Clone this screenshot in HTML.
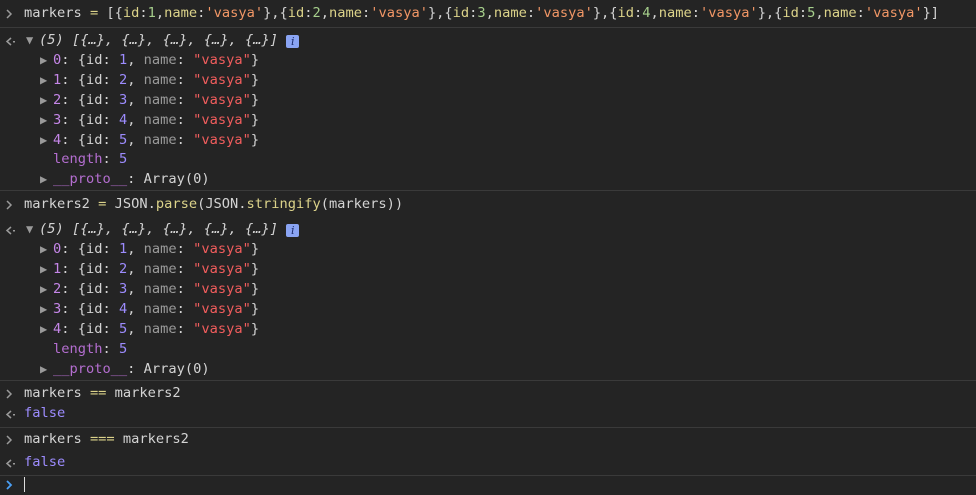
<!DOCTYPE html>
<html><head><meta charset="utf-8"><style>
body{margin:0;width:976px;height:495px;background:#242424;overflow:hidden;font-family:"DejaVu Sans Mono","Liberation Mono",monospace;font-size:13.7px;color:#d4d4d4;position:relative}
.l{position:absolute;left:0;white-space:pre;line-height:20px;height:20px}
.sep{position:absolute;left:0;width:976px;height:1px;background:#3a3a3a}
.y{color:#dcd38a}.g{color:#a6cf8c}.o{color:#f29766}.p{color:#c586e8}.n{color:#9d8cff}.r{color:#f25d5d}.k{color:#9a9a9a}.it{font-style:italic}
.lk{color:#b46ed0}
.pr{position:absolute;left:5px;top:5px}
.tri{display:inline-block;width:13px;color:#9a9a9a;font-size:12px;vertical-align:0}
.info{display:inline-block;width:13px;height:13px;background:#8aa4f3;color:#1a2a6a;border-radius:2px;font-size:11px;line-height:13px;text-align:center;font-style:italic;vertical-align:-1px;font-family:"DejaVu Serif",serif}
</style></head><body>
<svg width="0" height="0" style="position:absolute"><defs>
<g id="gt"><path d="M2 2 L6 6 L2 10" fill="none" stroke="#9a9a9a" stroke-width="1.5"/></g>
<g id="lt"><path d="M6 3 L2 6.5 L6 10" fill="none" stroke="#9a9a9a" stroke-width="1.5"/><rect x="8" y="6" width="2" height="1.5" fill="#9a9a9a"/></g>
</defs></svg>
<div class="l" style="top:3px"><svg class="pr" width="12" height="12"><use href="#gt"/></svg><span style="position:absolute;left:24px">markers <span class="y">=</span> [{<span class="y">id</span>:<span class="g">1</span>,<span class="y">name</span>:<span class="o">'vasya'</span>},{<span class="y">id</span>:<span class="g">2</span>,<span class="y">name</span>:<span class="o">'vasya'</span>},{<span class="y">id</span>:<span class="g">3</span>,<span class="y">name</span>:<span class="o">'vasya'</span>},{<span class="y">id</span>:<span class="g">4</span>,<span class="y">name</span>:<span class="o">'vasya'</span>},{<span class="y">id</span>:<span class="g">5</span>,<span class="y">name</span>:<span class="o">'vasya'</span>}]</span></div>
<div class="sep" style="top:27px"></div>
<div class="l" style="top:30px"><svg class="pr" width="12" height="12"><use href="#lt"/></svg><span style="position:absolute;left:26px"><span class="tri">▼</span><span class="it">(5) [{…}, {…}, {…}, {…}, {…}]</span> <span class="info">i</span></span></div>
<div class="l" style="top:50px;left:40px"><span class="tri">▶</span><span class="p">0</span>: {id: <span class="n">1</span>, <span class="k">name</span>: <span class="r">"vasya"</span>}</div>
<div class="l" style="top:70px;left:40px"><span class="tri">▶</span><span class="p">1</span>: {id: <span class="n">2</span>, <span class="k">name</span>: <span class="r">"vasya"</span>}</div>
<div class="l" style="top:90px;left:40px"><span class="tri">▶</span><span class="p">2</span>: {id: <span class="n">3</span>, <span class="k">name</span>: <span class="r">"vasya"</span>}</div>
<div class="l" style="top:110px;left:40px"><span class="tri">▶</span><span class="p">3</span>: {id: <span class="n">4</span>, <span class="k">name</span>: <span class="r">"vasya"</span>}</div>
<div class="l" style="top:130px;left:40px"><span class="tri">▶</span><span class="p">4</span>: {id: <span class="n">5</span>, <span class="k">name</span>: <span class="r">"vasya"</span>}</div>
<div class="l" style="top:149px;left:53px"><span class="lk">length</span>: <span class="n">5</span></div>
<div class="l" style="top:169px;left:40px"><span class="tri">▶</span><span class="lk">__proto__</span>: Array(0)</div>
<div class="sep" style="top:190px"></div>
<div class="l" style="top:194px"><svg class="pr" width="12" height="12"><use href="#gt"/></svg><span style="position:absolute;left:24px">markers2 <span class="y">=</span> JSON.<span class="y">parse</span>(JSON.<span class="y">stringify</span>(markers))</span></div>
<div class="l" style="top:219px"><svg class="pr" width="12" height="12"><use href="#lt"/></svg><span style="position:absolute;left:26px"><span class="tri">▼</span><span class="it">(5) [{…}, {…}, {…}, {…}, {…}]</span> <span class="info">i</span></span></div>
<div class="l" style="top:239px;left:40px"><span class="tri">▶</span><span class="p">0</span>: {id: <span class="n">1</span>, <span class="k">name</span>: <span class="r">"vasya"</span>}</div>
<div class="l" style="top:259px;left:40px"><span class="tri">▶</span><span class="p">1</span>: {id: <span class="n">2</span>, <span class="k">name</span>: <span class="r">"vasya"</span>}</div>
<div class="l" style="top:279px;left:40px"><span class="tri">▶</span><span class="p">2</span>: {id: <span class="n">3</span>, <span class="k">name</span>: <span class="r">"vasya"</span>}</div>
<div class="l" style="top:299px;left:40px"><span class="tri">▶</span><span class="p">3</span>: {id: <span class="n">4</span>, <span class="k">name</span>: <span class="r">"vasya"</span>}</div>
<div class="l" style="top:319px;left:40px"><span class="tri">▶</span><span class="p">4</span>: {id: <span class="n">5</span>, <span class="k">name</span>: <span class="r">"vasya"</span>}</div>
<div class="l" style="top:339px;left:53px"><span class="lk">length</span>: <span class="n">5</span></div>
<div class="l" style="top:359px;left:40px"><span class="tri">▶</span><span class="lk">__proto__</span>: Array(0)</div>
<div class="sep" style="top:380px"></div>
<div class="l" style="top:383px"><svg class="pr" width="12" height="12"><use href="#gt"/></svg><span style="position:absolute;left:24px">markers <span class="y">==</span> markers2</span></div>
<div class="l" style="top:403px"><svg class="pr" width="12" height="12"><use href="#lt"/></svg><span style="position:absolute;left:24px" class="n">false</span></div>
<div class="sep" style="top:427px"></div>
<div class="l" style="top:429px"><svg class="pr" width="12" height="12"><use href="#gt"/></svg><span style="position:absolute;left:24px">markers <span class="y">===</span> markers2</span></div>
<div class="l" style="top:452px"><svg class="pr" width="12" height="12"><use href="#lt"/></svg><span style="position:absolute;left:24px" class="n">false</span></div>
<div class="sep" style="top:475px"></div>
<svg style="position:absolute;left:5px;top:479px" width="12" height="12"><path d="M2 2 L6 6 L2 10" fill="none" stroke="#4a9ff5" stroke-width="1.8"/></svg>
<div style="position:absolute;left:24px;top:477px;width:1px;height:15px;background:#ddd"></div>
</body></html>
